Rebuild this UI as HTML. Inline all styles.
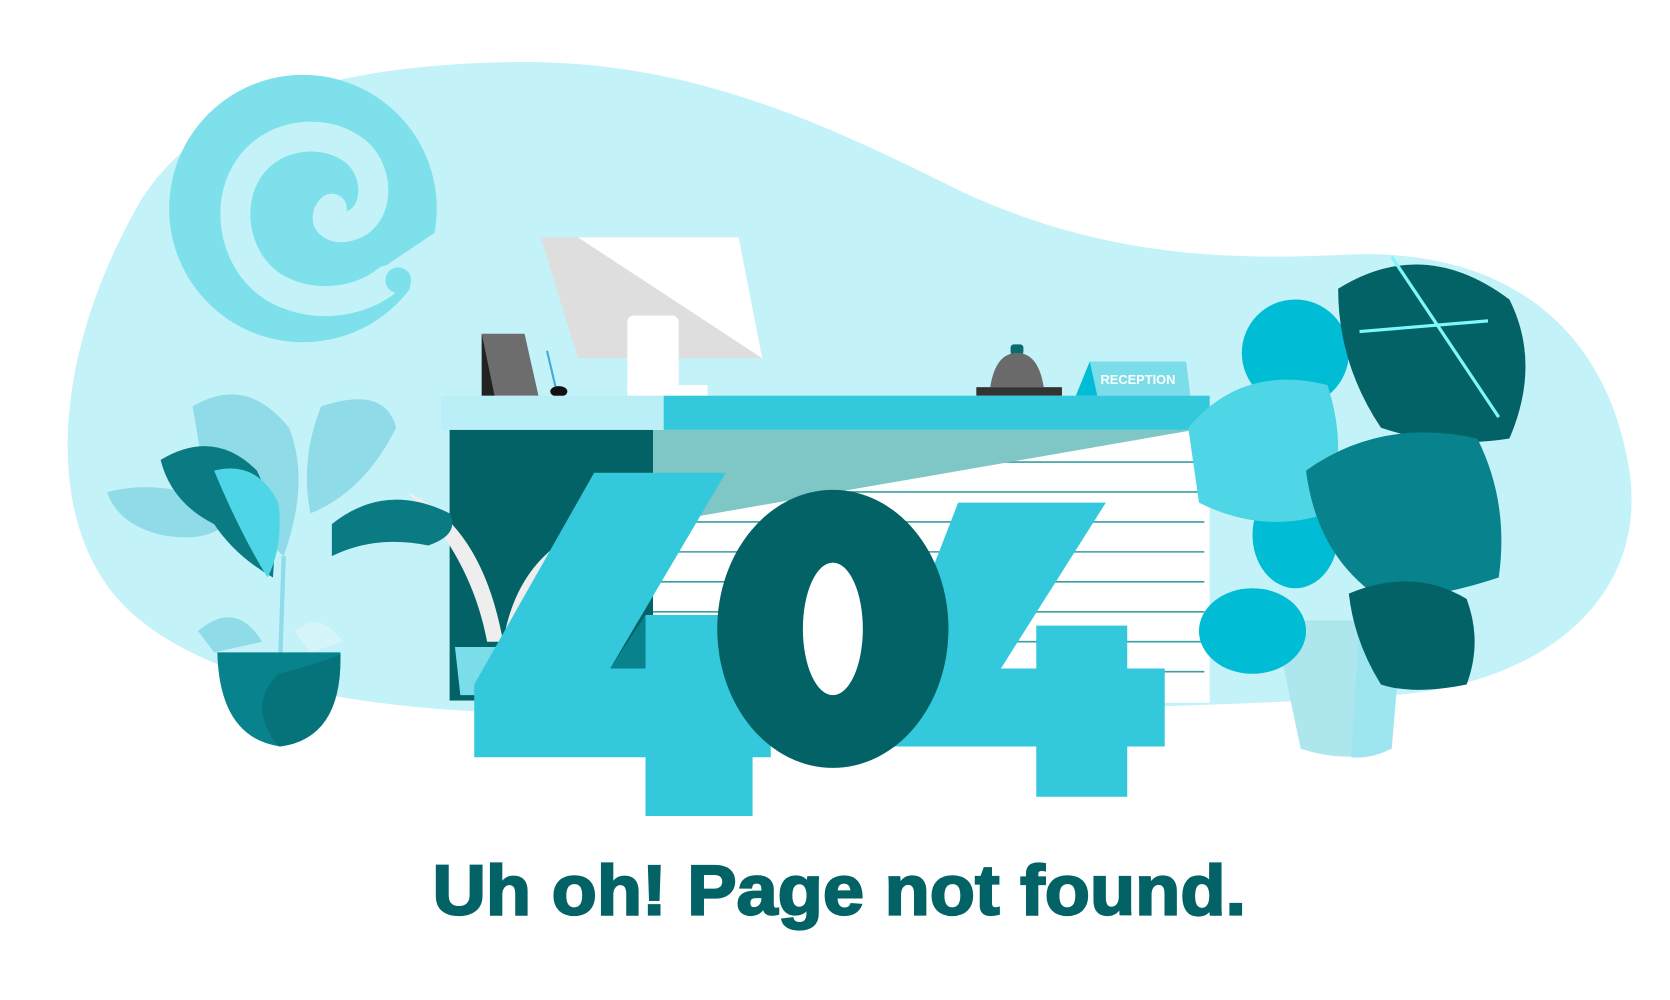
<!DOCTYPE html>
<html><head><meta charset="utf-8"><style>
html,body{margin:0;padding:0;background:#fff;width:1670px;height:1000px;overflow:hidden}
svg{display:block}
</style></head><body>
<svg width="1670" height="1000" viewBox="0 0 1560 935" preserveAspectRatio="none" xmlns="http://www.w3.org/2000/svg">
<path d="M130 190 C190 90 330 60 480 58 C640 56 760 110 900 180 C1020 235 1130 245 1260 238 C1400 232 1500 300 1522 440 C1540 560 1440 640 1300 650 C1100 665 800 665 600 668 C420 670 200 660 110 560 C40 480 50 330 130 190 Z" fill="#c3f3f9"/>
<!-- swirl -->
<circle cx="283" cy="195" r="125" fill="#7ee0ea"/>
<path d="M395 200 C395 260 380 235 372 250" stroke="#c3f3f9" stroke-width="0" fill="none"/>
<path d="M410 215 L410 330 L330 330 C360 320 380 300 383 268 C384 255 375 250 368 255 C355 265 340 262 340 262 Z" fill="#c3f3f9"/>
<path d="M362 262 C340 280 300 290 262 272 C222 252 210 200 228 165 C248 125 300 118 330 140 C355 158 355 200 330 210 C310 218 300 205 310 195" stroke="#c3f3f9" stroke-width="28" fill="none" stroke-linecap="round"/>
<circle cx="372" cy="262" r="12" fill="#7ee0ea"/>
<!-- monitor -->
<path d="M505 222 L690 222 L712 335 L540 335 Z" fill="#dedede"/>
<path d="M540 222 L690 222 L712 335Z" fill="#fff"/>
<rect x="586" y="295" width="48" height="75" rx="6" fill="#fff"/>
<rect x="586" y="360" width="75" height="10" fill="#fff"/>
<path d="M450 312 L490 312 L503 370 L450 370Z" fill="#6d6d6d"/>
<path d="M450 312 L462 370 L450 370Z" fill="#222"/>
<line x1="511" y1="328" x2="519" y2="362" stroke="#4ad" stroke-width="2"/>
<ellipse cx="522" cy="366" rx="8" ry="5" fill="#111"/>
<rect x="944" y="322" width="12" height="10" rx="3" fill="#0b6b6e"/>
<path d="M925 362 Q930 330 950 330 Q970 330 975 362Z" fill="#6a6a6a"/>
<rect x="912" y="362" width="80" height="8" fill="#333"/>
<path d="M1005 370 L1018 338 L1108 338 L1112 370Z" fill="#7adde9"/>
<path d="M1005 370 L1018 338 L1025 370Z" fill="#00bcd4"/>
<text x="1063" y="359" font-family="Liberation Sans, sans-serif" font-size="12" font-weight="bold" fill="#fff" text-anchor="middle">RECEPTION</text>
<rect x="412" y="370" width="210" height="32" fill="#baeff7"/>
<rect x="620" y="370" width="510" height="32" fill="#34c8dc"/>
<rect x="420" y="402" width="190" height="253" fill="#036266"/>
<rect x="610" y="402" width="520" height="255" fill="#fff"/>
<g stroke="#3a9ea3" stroke-width="1.5">
<line x1="610" y1="432" x2="1125" y2="432"/><line x1="610" y1="460" x2="1125" y2="460"/>
<line x1="610" y1="488" x2="1125" y2="488"/><line x1="610" y1="516" x2="1125" y2="516"/>
<line x1="610" y1="544" x2="1125" y2="544"/><line x1="610" y1="572" x2="1125" y2="572"/>
<line x1="610" y1="600" x2="1125" y2="600"/><line x1="610" y1="628" x2="1125" y2="628"/>
</g>
<path d="M610 402 L1115 402 L610 490Z" fill="#7fc6c7"/>
<path d="M380 460 Q450 490 470 600 L455 600 Q440 520 380 460Z" fill="#eee"/>
<path d="M520 510 Q480 540 470 600 L485 600 Q490 550 520 510Z" fill="#eee"/>
<path d="M425 605 L475 605 L470 650 L430 650Z" fill="#7adde9"/>
<!-- left plant -->
<path d="M180 380 Q230 350 270 400 Q290 450 265 520 Q220 480 190 440Z" fill="#8fdbe8"/>
<path d="M300 380 Q360 360 370 400 Q340 460 290 480 Q280 430 300 380Z" fill="#8fdbe8"/>
<path d="M100 460 Q160 445 220 480 Q200 510 150 500 Q110 490 100 460Z" fill="#8fdbe8"/>
<path d="M150 430 Q200 400 240 440 Q260 480 255 540 Q220 520 200 490 Q160 470 150 430Z" fill="#0b7b83"/>
<path d="M200 440 Q240 430 260 470 Q265 510 250 540 Q225 500 200 440Z" fill="#4fd6e6"/>
<path d="M310 490 Q360 450 420 480 Q430 500 400 510 Q350 500 310 520Z" fill="#0b7b83"/>
<path d="M185 590 Q220 560 245 600 L200 610 Z" fill="#8fdbe8"/>
<path d="M275 590 Q300 570 320 600 L290 610 Z" fill="#d5f5fa"/>
<path d="M262 610 L265 520" stroke="#8fdbe8" stroke-width="4"/>
<path d="M203 610 L318 610 Q320 690 262 698 Q205 690 203 610Z" fill="#08828c"/>
<path d="M260 698 Q230 660 260 630 Q300 620 318 612 Q320 690 262 698Z" fill="#036266" opacity=".5"/>
<!-- right plant -->
<path d="M1190 580 L1310 580 L1300 700 Q1260 715 1215 700Z" fill="#aee6ed"/>
<path d="M1270 580 L1310 580 L1300 700 Q1280 710 1262 708Z" fill="#9de6f0"/>
<ellipse cx="1210" cy="330" rx="50" ry="50" fill="#00bcd4"/>
<ellipse cx="1170" cy="590" rx="50" ry="40" fill="#00bcd4"/>
<ellipse cx="1210" cy="500" rx="40" ry="50" fill="#00bcd4"/>
<path d="M1110 400 Q1160 340 1240 360 Q1260 420 1240 480 Q1180 500 1120 470Z" fill="#4fd6e6"/>
<path d="M1250 270 Q1330 220 1410 280 Q1440 340 1410 410 Q1350 420 1290 400 Q1250 340 1250 270Z" fill="#036266"/>
<path d="M1300 240 L1400 390 M1270 310 L1390 300" stroke="#7ff7fb" stroke-width="3" fill="none"/>
<path d="M1220 440 Q1290 390 1380 410 Q1410 470 1400 540 Q1340 560 1290 560 Q1230 520 1220 440Z" fill="#08828c"/>
<path d="M1260 555 Q1320 530 1370 560 Q1385 600 1370 640 Q1320 650 1290 640 Q1265 600 1260 555Z" fill="#036266"/>
<!-- 404 -->
<path d="M555 442 L678 442 L570 625 L603 625 L603 575 L703 575 L703 625 L720 625 L720 708 L703 708 L703 763 L603 763 L603 708 L443 708 L443 640Z" fill="#34c8dc"/>
<path d="M895 470 L1033 470 L935 625 L968 625 L968 585 L1053 585 L1053 625 L1088 625 L1088 698 L1053 698 L1053 745 L968 745 L968 698 L835 698 L835 625Z" fill="#34c8dc"/>
<path d="M603 575 L603 625 L570 625 L603 575Z" fill="#08828c"/>
<ellipse cx="778" cy="588" rx="108" ry="130" fill="#036266"/>
<ellipse cx="778" cy="588" rx="28" ry="62" fill="#fff"/>
<text x="784" y="855" font-family="Liberation Sans, sans-serif" font-size="66" font-weight="bold" fill="#036266" stroke="#036266" stroke-width="2" text-anchor="middle" textLength="760" lengthAdjust="spacingAndGlyphs">Uh oh! Page not found.</text>
</svg>
</body></html>
